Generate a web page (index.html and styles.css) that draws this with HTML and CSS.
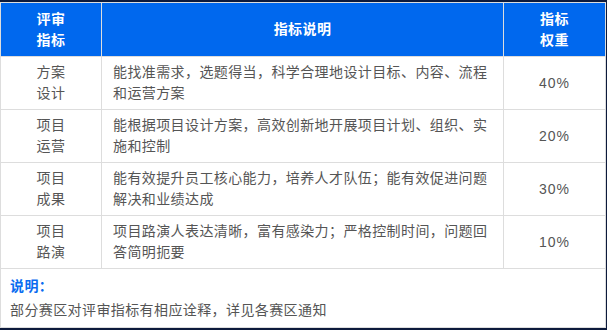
FILE: index.html
```html
<!DOCTYPE html>
<html lang="zh-CN">
<head>
<meta charset="utf-8">
<title>评审指标</title>
<link rel="stylesheet" href="styles.css">
</head>
<body>
<div class="frame">
  <table class="criteria">
    <colgroup>
      <col class="c1">
      <col class="c2">
      <col class="c3">
    </colgroup>
    <thead>
      <tr>
        <th>评审<br>指标</th>
        <th>指标说明</th>
        <th>指标<br>权重</th>
      </tr>
    </thead>
    <tbody>
      <tr>
        <td class="name">方案<br>设计</td>
        <td class="desc">能找准需求，选题得当，科学合理地设计目标、内容、流程和运营方案</td>
        <td class="weight">40%</td>
      </tr>
      <tr>
        <td class="name">项目<br>运营</td>
        <td class="desc">能根据项目设计方案，高效创新地开展项目计划、组织、实施和控制</td>
        <td class="weight">20%</td>
      </tr>
      <tr>
        <td class="name">项目<br>成果</td>
        <td class="desc">能有效提升员工核心能力，培养人才队伍；能有效促进问题解决和业绩达成</td>
        <td class="weight">30%</td>
      </tr>
      <tr>
        <td class="name">项目<br>路演</td>
        <td class="desc">项目路演人表达清晰，富有感染力；严格控制时间，问题回答简明扼要</td>
        <td class="weight">10%</td>
      </tr>
      <tr>
        <td class="note" colspan="3">
          <p class="note-title">说明：</p>
          <p class="note-text">部分赛区对评审指标有相应诠释，详见各赛区通知</p>
        </td>
      </tr>
    </tbody>
  </table>
</div>
</body>
</html>
```
FILE: styles.css
```css
html, body {
  margin: 0;
  padding: 0;
  background: #0c1a3c;
  width: 607px;
  height: 330px;
  overflow: hidden;
}

.frame {
  padding-top: 2px;
  width: 605px;
  background: #0c1a3c;
}

.criteria {
  width: 605px;
  border-collapse: collapse;
  table-layout: fixed;
  background: #ffffff;
  font-family: "Liberation Sans", "Noto Sans CJK SC", sans-serif;
  font-size: 14px;
  letter-spacing: 0.4px;
  color: #555555;
}

.c1 { width: 101px; }
.c2 { width: 402px; }
.c3 { width: 102px; }

.criteria th,
.criteria td {
  border: 1px solid #dddddd;
  line-height: 21px;
  padding: 0 11px;
  vertical-align: middle;
}

.criteria th {
  background: #0068ee;
  color: #ffffff;
  font-weight: bold;
  height: 53px;
  text-align: center;
}

.criteria td {
  height: 52px;
}

.criteria .name,
.criteria .weight {
  text-align: center;
}

.criteria .weight {
  letter-spacing: 1px;
}

.criteria .desc {
  text-align: left;
}

.criteria .note {
  height: 48px;
  padding: 5px 9px;
}

.note p {
  margin: 0;
  line-height: 24px;
}

.note-title {
  color: #0a6cf0;
  font-weight: bold;
}

.note-text {
  color: #555555;
}
```
